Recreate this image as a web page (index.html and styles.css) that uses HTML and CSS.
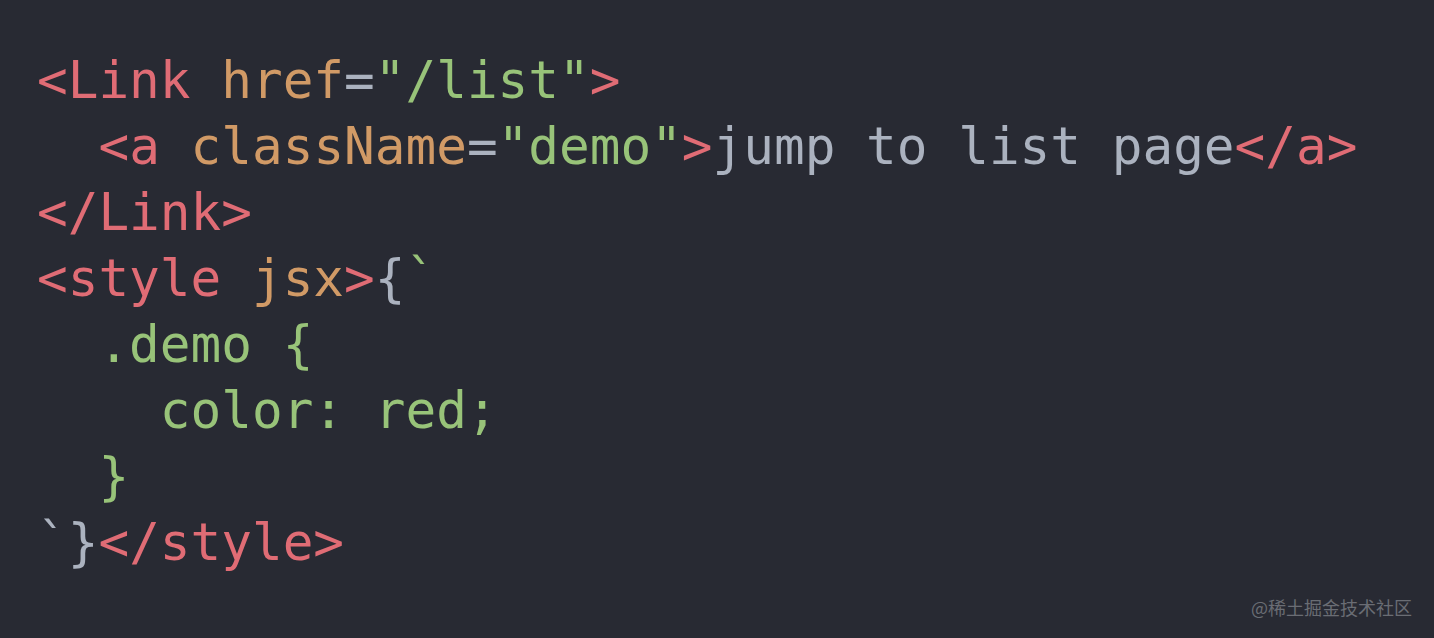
FILE: index.html
```html
<!DOCTYPE html>
<html lang="en">
<head>
<meta charset="utf-8">
<title>Code</title>
<link rel="stylesheet" href="styles.css">
</head>
<body>
<main class="code-block">
<pre class="code"><code><span class="tag">&lt;Link</span> <span class="attr">href</span><span class="punc">=</span><span class="str">"/list"</span><span class="tag">&gt;</span>
  <span class="tag">&lt;a</span> <span class="attr">className</span><span class="punc">=</span><span class="str">"demo"</span><span class="tag">&gt;</span><span class="text">jump to list page</span><span class="tag">&lt;/a&gt;</span>
<span class="tag">&lt;/Link&gt;</span>
<span class="tag">&lt;style</span> <span class="attr">jsx</span><span class="tag">&gt;</span><span class="punc">{</span><span class="str">`</span>
<span class="str">  .demo {</span>
<span class="str">    color: red;</span>
<span class="str">  }</span>
<span class="punc">`}</span><span class="tag">&lt;/style&gt;</span></code></pre>
<div class="watermark">@稀土掘金技术社区</div>
</main>
</body>
</html>
```
FILE: styles.css
```css
html, body {
  margin: 0;
  padding: 0;
  background: #282a33;
}
.code-block {
  width: 1434px;
  height: 638px;
  box-sizing: border-box;
  padding: 48px 0 0 37px;
  background: #282a33;
  position: relative;
  overflow: hidden;
}
.code {
  margin: 0;
  font-family: "DejaVu Sans Mono", "Liberation Mono", monospace;
  font-size: 51px;
  line-height: 66px;
  color: #abb2bf;
  white-space: pre;
}
.tag { color: #e06c75; }
.attr { color: #d19a66; }
.str { color: #98c379; }
.punc { color: #abb2bf; }
.text { color: #abb2bf; }
.watermark {
  position: absolute;
  right: 22px;
  bottom: 19px;
  font-family: "Noto Sans CJK SC", "Noto Sans", sans-serif;
  font-size: 18px;
  line-height: 24px;
  color: #6a6d74;
}
```
